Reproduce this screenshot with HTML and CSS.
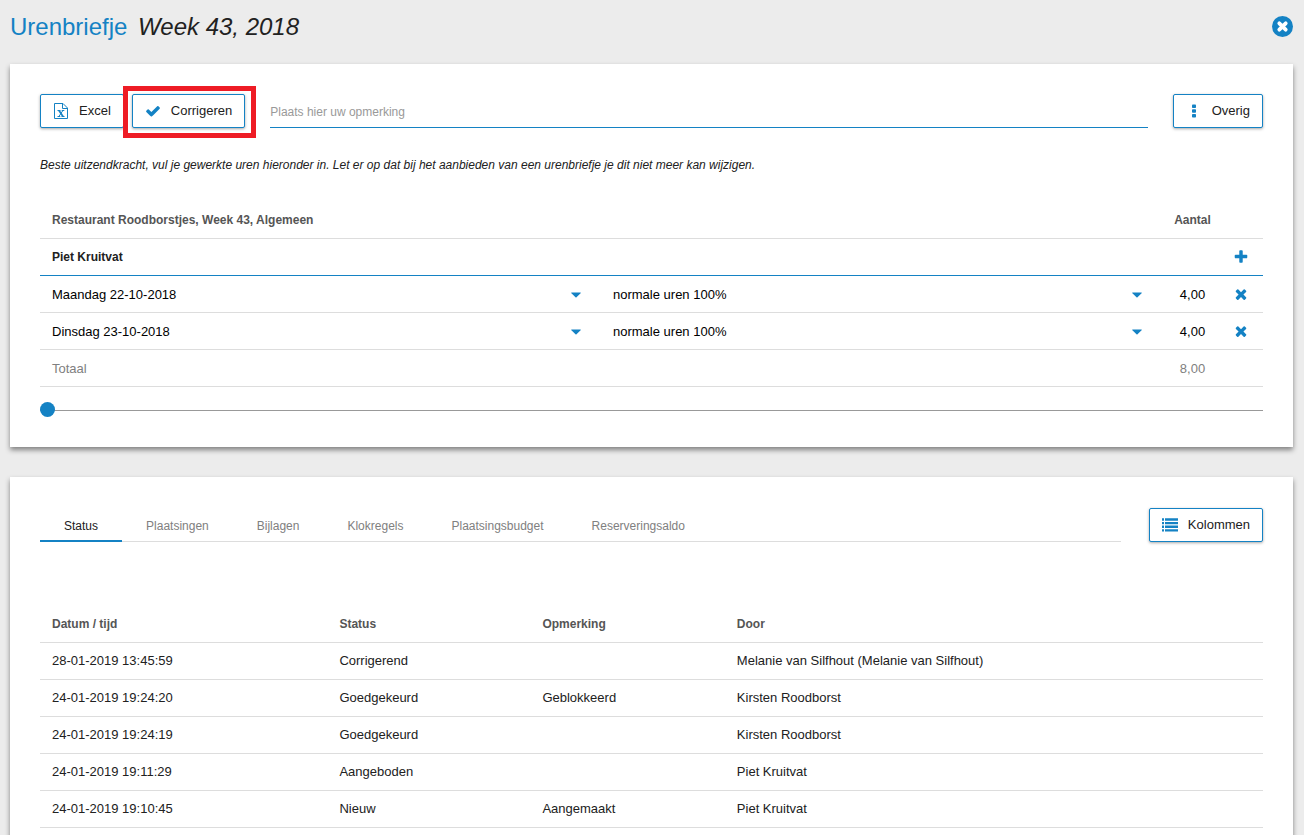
FILE: index.html
```html
<!DOCTYPE html>
<html lang="nl">
<head>
    <meta charset="utf-8">
    <title>Urenbriefje</title>
    <link rel="stylesheet" href="styles.css">
</head>
<body>
    <svg class="sprite" aria-hidden="true">
        <symbol id="times" viewBox="0 0 1792 1792"><path d="M1490 1322q0 40-28 68l-136 136q-28 28-68 28t-68-28l-294-294-294 294q-28 28-68 28t-68-28l-136-136q-28-28-28-68t28-68l294-294-294-294q-28-28-28-68t28-68l136-136q28-28 68-28t68 28l294 294 294-294q28-28 68-28t68 28l136 136q28 28 28 68t-28 68l-294 294 294 294q28 28 28 68z"/></symbol>
        <symbol id="caret" viewBox="0 0 10 6"><path d="M0.5 0.5h9q.6.3.1.8L5.5 5.3q-.5.4-1 0L.4 1.3q-.5-.5.1-.8z"/></symbol>
    </svg>

    <header class="page-header">
        <h1>Urenbriefje <em>Week 43, 2018</em></h1>
        <button class="close" aria-label="Sluiten">
            <svg viewBox="0 0 21 21"><circle cx="10.5" cy="10.5" r="10.5" fill="#1482c4"/><path d="M7.3 7.3l6.4 6.4M13.7 7.3l-6.4 6.4" stroke="#fff" stroke-width="3.8" stroke-linecap="round"/></svg>
        </button>
    </header>

    <main>
        <section class="card">
            <div class="toolbar">
                <button class="btn">
                    <svg class="icon" viewBox="0 0 16 16"><path d="M1.5.5h8.5l4.5 4.5v10.5h-13zM9.5.8v4.7h4.8" fill="none" stroke="#1482c4"/><path d="M4.5 7.5h3M8.7 7.5h2.6M4.5 13.5h2.8M8.5 13.5h3M9.9 7.5l-4 6" fill="none" stroke="#1482c4"/><path d="M6 7.5l4 6" fill="none" stroke="#1482c4" stroke-width="1.7"/></svg>
                    Excel
                </button>
                <div class="highlight">
                    <button class="btn">
                        <svg class="icon" viewBox="0 0 1792 1792"><path d="M1671 566q0 40-28 68l-724 724-136 136q-28 28-68 28t-68-28l-136-136-362-362q-28-28-28-68t28-68l136-136q28-28 68-28t68 28l294 295 656-657q28-28 68-28t68 28l136 136q28 28 28 68z"/></svg>
                        Corrigeren
                    </button>
                </div>
                <input class="remark" type="text" placeholder="Plaats hier uw opmerking" aria-label="Opmerking">
                <button class="btn">
                    <svg class="icon" viewBox="0 0 16 16"><rect x="6" y="1.5" width="4" height="3.6" rx=".8"/><rect x="6" y="6.2" width="4" height="3.6" rx=".8"/><rect x="6" y="10.9" width="4" height="3.6" rx=".8"/></svg>
                    Overig
                </button>
            </div>

            <p class="note">Beste uitzendkracht, vul je gewerkte uren hieronder in. Let er op dat bij het aanbieden van een urenbriefje je dit niet meer kan wijzigen.</p>

            <table class="hours">
                <colgroup>
                    <col>
                    <col>
                    <col class="col-amount">
                    <col class="col-action">
                </colgroup>
                <thead>
                    <tr>
                        <th colspan="2">Restaurant Roodborstjes, Week 43, Algemeen</th>
                        <th class="amount">Aantal</th>
                        <th></th>
                    </tr>
                </thead>
                <tbody>
                    <tr class="person">
                        <th colspan="3">Piet Kruitvat</th>
                        <td>
                            <button class="icon-btn" aria-label="Toevoegen"><svg class="icon" viewBox="0 0 1792 1792"><path d="M1600 736v192q0 40-28 68t-68 28h-416v416q0 40-28 68t-68 28h-192q-40 0-68-28t-28-68v-416h-416q-40 0-68-28t-28-68v-192q0-40 28-68t68-28h416v-416q0-40 28-68t68-28h192q40 0 68 28t28 68v416h416q40 0 68 28t28 68z"/></svg></button>
                        </td>
                    </tr>
                    <tr>
                        <td><div class="select"><select aria-label="Dag"><option>Maandag 22-10-2018</option></select><svg class="caret"><use href="#caret"/></svg></div></td>
                        <td><div class="select"><select aria-label="Soort uren"><option>normale uren 100%</option></select><svg class="caret"><use href="#caret"/></svg></div></td>
                        <td class="amount"><input type="text" value="4,00" aria-label="Aantal"></td>
                        <td><button class="icon-btn" aria-label="Verwijderen"><svg class="icon"><use href="#times"/></svg></button></td>
                    </tr>
                    <tr>
                        <td><div class="select"><select aria-label="Dag"><option>Dinsdag 23-10-2018</option></select><svg class="caret"><use href="#caret"/></svg></div></td>
                        <td><div class="select"><select aria-label="Soort uren"><option>normale uren 100%</option></select><svg class="caret"><use href="#caret"/></svg></div></td>
                        <td class="amount"><input type="text" value="4,00" aria-label="Aantal"></td>
                        <td><button class="icon-btn" aria-label="Verwijderen"><svg class="icon"><use href="#times"/></svg></button></td>
                    </tr>
                    <tr class="total">
                        <td colspan="2">Totaal</td>
                        <td class="amount">8,00</td>
                        <td></td>
                    </tr>
                </tbody>
            </table>

            <input class="slider" type="range" min="0" max="100" value="0" aria-label="Positie">
        </section>

        <section class="card">
            <div class="tab-bar">
                <nav class="tabs">
                    <a class="tab active" href="#">Status</a>
                    <a class="tab" href="#">Plaatsingen</a>
                    <a class="tab" href="#">Bijlagen</a>
                    <a class="tab" href="#">Klokregels</a>
                    <a class="tab" href="#">Plaatsingsbudget</a>
                    <a class="tab" href="#">Reserveringsaldo</a>
                </nav>
                <button class="btn">
                    <svg class="icon" viewBox="0 0 16 16"><path d="M0 1.2h2v2.6H0zM3 1.2h13v2.6H3zM0 4.9h2v2.4H0zM3 4.9h13v2.4H3zM0 8.5h2v2.4H0zM3 8.5h13v2.4H3zM0 12.2h2v2.4H0zM3 12.2h13v2.4H3z"/></svg>
                    Kolommen
                </button>
            </div>

            <table class="history">
                <colgroup>
                    <col class="col-date">
                    <col class="col-status">
                    <col class="col-remark">
                    <col>
                </colgroup>
                <thead>
                    <tr><th>Datum / tijd</th><th>Status</th><th>Opmerking</th><th>Door</th></tr>
                </thead>
                <tbody>
                    <tr><td>28-01-2019 13:45:59</td><td>Corrigerend</td><td></td><td>Melanie van Silfhout (Melanie van Silfhout)</td></tr>
                    <tr><td>24-01-2019 19:24:20</td><td>Goedgekeurd</td><td>Geblokkeerd</td><td>Kirsten Roodborst</td></tr>
                    <tr><td>24-01-2019 19:24:19</td><td>Goedgekeurd</td><td></td><td>Kirsten Roodborst</td></tr>
                    <tr><td>24-01-2019 19:11:29</td><td>Aangeboden</td><td></td><td>Piet Kruitvat</td></tr>
                    <tr><td>24-01-2019 19:10:45</td><td>Nieuw</td><td>Aangemaakt</td><td>Piet Kruitvat</td></tr>
                </tbody>
            </table>
        </section>
    </main>
</body>
</html>
```
FILE: styles.css
```css
* {
    box-sizing: border-box;
}

body {
    margin: 0;
    padding: 0 11px 0 10px;
    height: 100vh;
    overflow: hidden;
    background: #ececec;
    color: #212121;
    font-family: Arial, "Liberation Sans", sans-serif;
    font-size: 13px;
}

button, input, select {
    font: inherit;
    color: inherit;
}

button {
    cursor: pointer;
}

.sprite {
    display: none;
}

.icon {
    width: 16px;
    height: 16px;
    flex: none;
    fill: #1482c4;
}

.page-header {
    display: flex;
    justify-content: space-between;
    align-items: center;
    height: 64px;
    padding-bottom: 11px;
}

h1 {
    margin: 0;
    font-size: 24px;
    font-weight: normal;
    color: #1482c4;
}

h1 em {
    margin-left: 4px;
    color: #212121;
}

.close {
    width: 21px;
    height: 21px;
    padding: 0;
    border: 0;
    background: none;
}

.close svg {
    display: block;
}

.card {
    margin-bottom: 30px;
    padding: 30px;
    background: #fff;
    box-shadow: 0 3px 5px rgba(0, 0, 0, 0.45);
}

/* toolbar */
.toolbar {
    display: flex;
}

.btn {
    display: flex;
    align-items: center;
    gap: 10px;
    height: 34px;
    padding: 0 12px 2px;
    border: 1px solid #1482c4;
    border-radius: 2px;
    background: #fff;
    box-shadow: 0 1px 3px rgba(0, 0, 0, 0.35);
    white-space: nowrap;
}

.btn .icon {
    margin-top: 2px;
}

.highlight {
    position: relative;
    margin-left: 8px;
}

.highlight::after {
    content: "";
    position: absolute;
    top: -8px;
    right: -11px;
    bottom: -10px;
    left: -9px;
    border: 5px solid #ee1c25;
    pointer-events: none;
}

.remark {
    flex: 1;
    min-width: 0;
    margin: 0 25px;
    padding: 2px 0 0;
    border: 0;
    border-bottom: 1px solid #1482c4;
    background: none;
    font-size: 12px;
}

.remark::placeholder {
    color: #999;
}

.note {
    margin: 29px 0;
    font-size: 12px;
    line-height: 16px;
    font-style: italic;
}

/* tables */
table {
    width: 100%;
    table-layout: fixed;
    border-collapse: separate;
    border-spacing: 0;
}

th, td {
    height: 37px;
    padding: 0 12px;
    border-bottom: 1px solid #ddd;
    text-align: left;
}

th {
    font-size: 12px;
    color: #555;
}

.history td {
    padding-bottom: 2px;
}

.col-amount {
    width: 61px;
}

.col-action {
    width: 40px;
}

.hours .amount {
    padding: 0;
    text-align: center;
}

.person th {
    color: #212121;
}

.person th, .person td {
    border-bottom-color: #1482c4;
}

.hours {
    color: #000;
}

.total {
    color: #808080;
}

.amount input {
    width: 100%;
    padding: 0;
    border: 0;
    background: none;
    text-align: center;
}

.select {
    position: relative;
    margin-right: 8px;
}

.select select {
    width: 100%;
    padding: 0;
    border: 0;
    background: none;
    appearance: none;
}

.caret {
    position: absolute;
    top: 5px;
    right: 0;
    width: 10px;
    height: 6px;
    fill: #1482c4;
    pointer-events: none;
}

.icon-btn {
    display: flex;
    justify-content: center;
    width: 12px;
    padding: 0;
    border: 0;
    background: none;
}

.slider {
    display: block;
    width: 100%;
    height: 15px;
    margin: 15px 0 0;
    appearance: none;
    background: linear-gradient(#999, #999) 0 8px / 100% 1px no-repeat;
}

.slider::-webkit-slider-thumb {
    appearance: none;
    width: 15px;
    height: 15px;
    border-radius: 50%;
    background: #1482c4;
}

/* tabs */
.tab-bar {
    display: flex;
    gap: 28px;
    padding-top: 1px;
    margin-bottom: 64px;
}

.tabs {
    flex: 1;
    display: flex;
    border-bottom: 1px solid #ddd;
}

.tab {
    padding: 4px 24px 0;
    font-size: 12px;
    line-height: 28px;
    color: #808080;
    text-decoration: none;
}

.tab.active {
    margin-bottom: -1px;
    border-bottom: 2px solid #1482c4;
    color: #212121;
}

.col-date {
    width: 23.5%;
}

.col-status {
    width: 16.6%;
}

.col-remark {
    width: 15.9%;
}
```
